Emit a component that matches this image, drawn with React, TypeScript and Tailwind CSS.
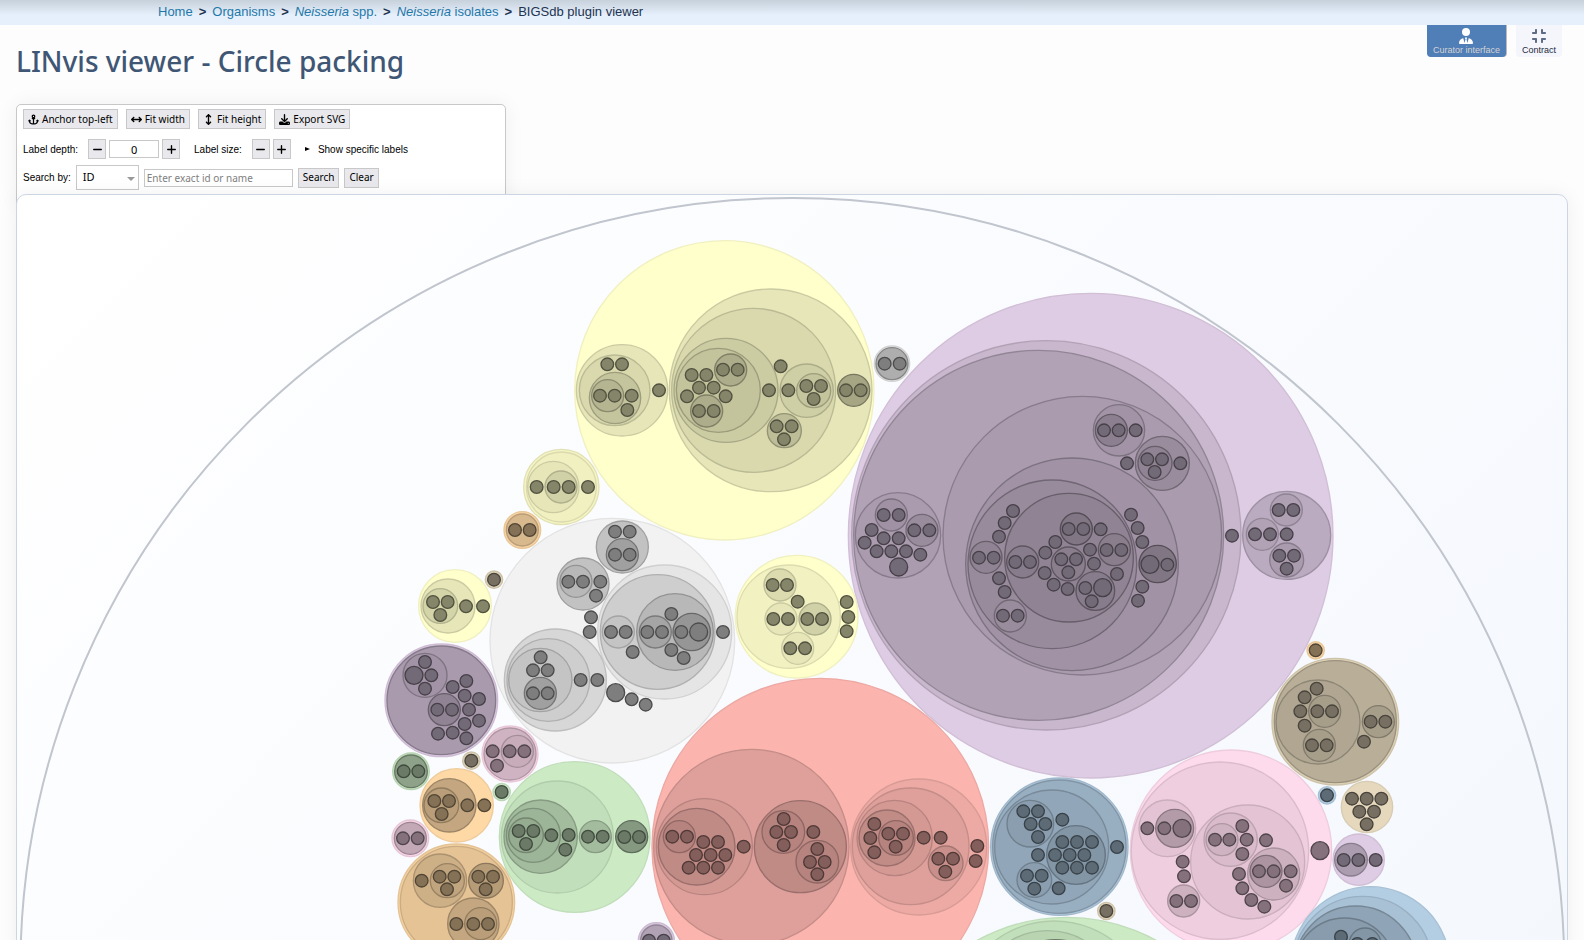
import { useState } from 'react'
import { FaAnchor, FaArrowsLeftRight, FaArrowsUpDown, FaCompress, FaDownload, FaMinus, FaPlus, FaUserTie } from 'react-icons/fa6'

// [cx, cy, radius, shade] where shade 1 is the plain cluster colour
type Ring = [number, number, number, number]
type Point = [number, number]

interface Cluster {
  color: string
  x: number
  y: number
  rings: Ring[]
  leaves: Point[]
  large?: Point[]
}

const YELLOW = '#ffffcc'
const PURPLE = '#decbe4'
const ORANGE = '#fed9a6'
const BROWN = '#e5d8bd'
const GREY = '#f2f2f2'
const PINK = '#fddaec'
const GREEN = '#ccebc5'
const RED = '#fbb4ae'
const BLUE = '#b3cde3'

const LEAF_SHADE = 0.52
const LEAF_RADIUS = 19
const LARGE_RADIUS = 27

const clusters: Cluster[] = [
  {
    color: YELLOW, x: 1680, y: 690,
    rings: [
      [493, 479, 449, 1], [186, 479, 137, 0.9], [164, 479, 106, 0.85], [165, 502, 77, 0.77], [143, 495, 48, 0.71],
      [632, 479, 304, 0.9], [581, 479, 246, 0.85], [498, 479, 156, 0.8], [475, 479, 126, 0.765],
      [512, 418, 48, 0.68], [440, 541, 48, 0.68], [740, 480, 80, 0.81], [761, 480, 51, 0.77],
      [673, 600, 51, 0.74], [881, 479, 48, 0.65],
    ],
    leaves: [
      [142, 401], [186, 401], [120, 495], [164, 495], [215, 495], [202, 538], [297, 479], [395, 433], [439, 433],
      [489, 417], [533, 417], [417, 471], [461, 471], [381, 497], [497, 497], [417, 541], [461, 541], [662, 407],
      [627, 479], [685, 479], [739, 466], [783, 466], [761, 505], [650, 587], [695, 587], [672, 626], [858, 479],
      [902, 479],
    ],
  },
  {
    color: GREY, x: 2520, y: 840,
    rings: [[156, 249, 53, 0.95], [156, 249, 48, 0.72]],
    leaves: [[134, 249], [179, 249]],
  },
  {
    color: PURPLE, x: 2520, y: 1320,
    rings: [
      [752, 285, 727, 1], [619, 284, 584, 0.9], [596, 284, 555, 0.8], [727, 285, 418, 0.765], [696, 371, 319, 0.725],
      [637, 371, 253, 0.685], [687, 351, 193, 0.65], [174, 284, 128, 0.765], [154, 223, 48, 0.72],
      [246, 269, 48, 0.69], [438, 350, 48, 0.65], [511, 526, 48, 0.69], [548, 364, 48, 0.61], [685, 370, 51, 0.62],
      [709, 265, 48, 0.58], [823, 327, 48, 0.62], [766, 451, 58, 0.61], [953, 370, 56, 0.58],
    ],
    leaves: [
      [131, 223], [176, 223], [95, 268], [74, 306], [131, 293], [176, 293], [223, 269], [268, 269], [110, 332],
      [154, 332], [198, 332], [241, 342], [519, 211], [494, 247], [477, 288], [417, 351], [461, 351], [477, 413],
      [494, 454], [489, 525], [533, 525], [526, 364], [570, 364], [646, 304], [616, 336], [664, 356], [708, 356],
      [685, 395], [614, 397], [641, 432], [683, 445], [686, 265], [730, 265], [782, 266], [750, 327], [762, 369],
      [800, 328], [844, 328], [736, 442], [755, 482], [831, 400], [873, 222], [893, 262], [907, 304], [982, 372],
      [907, 438], [894, 480],
    ],
    large: [[176, 379], [788, 441], [930, 371]],
  },
  {
    color: PURPLE, x: 3180, y: 1140,
    rings: [
      [177, 149, 77, 0.73], [154, 149, 48, 0.63], [307, 248, 81, 0.69], [285, 248, 51, 0.65], [680, 464, 132, 0.84],
      [607, 461, 48, 0.8], [679, 388, 48, 0.79], [680, 538, 51, 0.765],
    ],
    leaves: [
      [132, 149], [176, 149], [227, 149], [201, 248], [262, 236], [306, 236], [284, 274], [361, 248], [516, 465],
      [656, 388], [700, 388], [585, 461], [630, 461], [680, 461], [658, 525], [702, 525], [680, 564],
    ],
  },
  {
    color: YELLOW, x: 1140, y: 1320,
    rings: [[544, 139, 113, 0.96], [544, 139, 105, 0.94], [520, 139, 77, 0.9], [543, 139, 48, 0.82]],
    leaves: [[470, 139], [521, 139], [566, 139], [624, 139]],
  },
  {
    color: ORANGE, x: 1140, y: 1320,
    rings: [[427, 268, 55, 0.98], [427, 268, 48, 0.85]],
    leaves: [[405, 268], [449, 268]],
  },
  { color: BROWN, x: 1140, y: 1320, rings: [[342, 417, 26, 0.97]], leaves: [[342, 417]] },
  {
    color: YELLOW, x: 1140, y: 1320,
    rings: [[225, 496, 109, 1], [204, 496, 81, 0.9], [181, 496, 52, 0.83]],
    leaves: [[159, 484], [203, 484], [181, 523], [258, 497], [309, 497]],
  },
  {
    color: GREY, x: 1140, y: 1320,
    rings: [
      [697, 600, 367, 1], [854, 574, 201, 0.945], [833, 574, 172, 0.85], [885, 574, 115, 0.76], [826, 574, 48, 0.68],
      [935, 574, 56, 0.62], [715, 574, 48, 0.81], [727, 319, 78, 0.8], [727, 342, 48, 0.66], [609, 430, 78, 0.8],
      [588, 422, 48, 0.76], [526, 718, 153, 0.89], [505, 718, 124, 0.85], [481, 718, 95, 0.81], [481, 758, 48, 0.66],
    ],
    leaves: [
      [705, 273], [749, 273], [705, 342], [749, 342], [565, 423], [609, 423], [661, 423], [648, 465], [633, 530],
      [629, 574], [693, 574], [737, 574], [758, 634], [802, 574], [846, 574], [904, 574], [874, 520], [874, 628],
      [911, 652], [1029, 574], [482, 650], [459, 689], [503, 689], [459, 758], [503, 758], [602, 718], [652, 718],
      [755, 776], [797, 792],
    ],
    large: [[956, 574], [707, 756]],
  },
  {
    color: PURPLE, x: 1140, y: 1320,
    rings: [[184, 779, 169, 0.99], [184, 779, 163, 0.76], [135, 704, 66, 0.73], [193, 807, 48, 0.65]],
    leaves: [
      [135, 664], [154, 704], [135, 744], [172, 807], [216, 807], [218, 739], [259, 721], [254, 765], [297, 775],
      [267, 807], [297, 840], [254, 850], [218, 876], [174, 879], [259, 893],
    ],
    large: [[102, 704]],
  },
  {
    color: PINK, x: 1140, y: 1890,
    rings: [[390, 370, 84, 0.98], [390, 370, 78, 0.82], [412, 362, 48, 0.79]],
    leaves: [[338, 362], [389, 362], [433, 362], [351, 405]],
  },
  { color: BROWN, x: 1140, y: 1890, rings: [[274, 390, 26, 0.97]], leaves: [[274, 390]] },
  {
    color: GREEN, x: 1140, y: 1890,
    rings: [[93, 422, 55, 0.97], [93, 422, 49, 0.69]],
    leaves: [[71, 422], [115, 422]],
  },
  { color: GREEN, x: 1140, y: 1890, rings: [[365, 484, 26, 0.98]], leaves: [[365, 484]] },
  {
    color: ORANGE, x: 1140, y: 1890,
    rings: [[230, 524, 110, 1], [208, 524, 80, 0.77], [184, 524, 52, 0.73]],
    leaves: [[163, 511], [207, 511], [185, 550], [262, 524], [313, 524]],
  },
  {
    color: PINK, x: 1140, y: 1890,
    rings: [[91, 623, 55, 0.98], [91, 623, 48, 0.77]],
    leaves: [[69, 623], [113, 623]],
  },
  {
    color: ORANGE, x: 1140, y: 1890,
    rings: [
      [229, 815, 175, 0.97], [229, 815, 168, 0.9], [180, 750, 80, 0.81], [202, 750, 51, 0.76], [318, 750, 52, 0.72],
      [280, 879, 77, 0.77], [302, 879, 48, 0.73],
    ],
    leaves: [
      [125, 750], [179, 738], [223, 738], [201, 776], [295, 738], [339, 738], [317, 776], [229, 880], [280, 880],
      [324, 880],
    ],
  },
  {
    color: GREEN, x: 1140, y: 1890,
    rings: [
      [584, 619, 226, 1], [532, 619, 168, 0.95], [482, 618, 110, 0.8], [460, 614, 81, 0.765], [438, 614, 52, 0.73],
      [646, 618, 48, 0.8], [755, 618, 48, 0.65],
    ],
    leaves: [
      [416, 601], [460, 601], [438, 640], [514, 614], [566, 613], [556, 657], [624, 618], [668, 618], [733, 619],
      [777, 619],
    ],
  },
  {
    color: PURPLE, x: 1140, y: 1890,
    rings: [[829, 930, 54, 0.98], [829, 930, 47, 0.8]],
    leaves: [[807, 930], [851, 930]],
  },
  {
    color: YELLOW, x: 1920, y: 1620,
    rings: [
      [470, 228, 184, 1], [446, 228, 155, 0.945], [420, 133, 48, 0.86], [423, 235, 48, 0.9], [525, 235, 48, 0.82],
      [473, 323, 48, 0.9],
    ],
    leaves: [
      [398, 133], [441, 133], [473, 183], [400, 235], [444, 235], [502, 235], [546, 235], [620, 184], [625, 229],
      [620, 272], [451, 323], [495, 323],
    ],
  },
  {
    color: RED, x: 1920, y: 1620,
    rings: [
      [541, 918, 505, 1], [334, 919, 293, 0.89], [193, 918, 144, 0.85], [170, 918, 115, 0.765], [118, 888, 48, 0.73],
      [481, 918, 138, 0.765], [430, 874, 64, 0.73], [532, 963, 64, 0.73], [836, 919, 204, 0.945],
      [812, 917, 175, 0.89], [764, 892, 113, 0.85], [741, 892, 84, 0.77], [768, 892, 52, 0.73], [917, 968, 52, 0.8],
    ],
    leaves: [
      [97, 888], [141, 888], [190, 904], [234, 904], [168, 943], [212, 943], [256, 943], [146, 981], [190, 981],
      [234, 981], [311, 918], [431, 835], [409, 874], [453, 874], [431, 913], [520, 874], [532, 925], [510, 964],
      [554, 964], [532, 1001], [703, 850], [691, 892], [703, 935], [745, 879], [789, 879], [767, 918], [851, 891],
      [902, 891], [895, 954], [939, 954], [916, 993], [1012, 916], [1007, 961],
    ],
  },
  {
    color: BLUE, x: 2940, y: 2220,
    rings: [
      [238, 318, 206, 0.97], [238, 318, 200, 0.85], [215, 319, 171, 0.81], [151, 249, 70, 0.77], [288, 343, 88, 0.73],
      [163, 418, 52, 0.77],
    ],
    leaves: [
      [130, 212], [174, 212], [152, 250], [196, 250], [174, 289], [247, 237], [174, 343], [247, 304], [291, 304],
      [336, 304], [225, 343], [269, 343], [313, 343], [247, 381], [291, 381], [336, 381], [141, 405], [185, 405],
      [163, 444], [236, 443], [411, 319],
    ],
  },
  { color: BROWN, x: 2940, y: 2220, rings: [[379, 511, 26, 0.97]], leaves: [[379, 511]] },
  {
    color: PINK, x: 2940, y: 2220,
    rings: [
      [753, 330, 302, 1], [720, 330, 266, 0.945], [562, 263, 85, 0.9], [584, 263, 57, 0.71], [803, 364, 171, 0.9],
      [752, 297, 80, 0.86], [726, 297, 48, 0.82], [881, 400, 78, 0.81], [858, 392, 48, 0.68], [611, 481, 48, 0.81],
    ],
    leaves: [
      [502, 263], [553, 263], [608, 363], [612, 407], [589, 481], [633, 481], [705, 297], [748, 297], [800, 297],
      [787, 256], [787, 340], [858, 299], [777, 400], [787, 443], [814, 478], [853, 498], [837, 392], [881, 392],
      [932, 392], [918, 435],
    ],
    large: [[606, 263], [1020, 330]],
  },
  { color: BLUE, x: 2940, y: 2220, rings: [[1041, 164, 26, 0.99]], leaves: [[1041, 164]] },
  {
    color: GREEN, x: 2940, y: 2220,
    rings: [[260, 1086, 556, 1], [222, 836, 295, 0.95], [203, 786, 216, 0.9], [227, 767, 170, 0.7]],
    leaves: [],
  },
  { color: ORANGE, x: 3750, y: 1860, rings: [[197, 89, 26, 0.98]], leaves: [[197, 89]] },
  {
    color: BROWN, x: 3750, y: 1860,
    rings: [
      [256, 303, 190, 0.97], [256, 303, 183, 0.81], [204, 304, 126, 0.77], [224, 272, 48, 0.73], [208, 374, 48, 0.73],
      [385, 303, 48, 0.73],
    ],
    leaves: [
      [200, 204], [164, 230], [151, 272], [164, 315], [202, 272], [246, 272], [186, 374], [230, 374], [362, 303],
      [406, 303], [342, 363],
    ],
  },
  {
    color: BROWN, x: 3750, y: 1860,
    rings: [[351, 559, 77, 1]],
    leaves: [[306, 534], [350, 534], [394, 534], [328, 573], [372, 573], [350, 611]],
  },
  {
    color: PURPLE, x: 3750, y: 1860,
    rings: [[326, 717, 77, 1], [303, 717, 49, 0.77]],
    leaves: [[281, 718], [325, 718], [377, 718]],
  },
  {
    color: BLUE, x: 3750, y: 1860,
    rings: [
      [361, 1037, 239, 1], [338, 1036, 209, 0.94], [317, 1040, 184, 0.8], [284, 1043, 151, 0.76],
      [345, 970, 48, 0.73],
    ],
    leaves: [[273, 948], [322, 970], [367, 970]],
  },
]

function shade(hex: string, k: number) {
  const parts = [1, 3, 5].map(i => Math.round(parseInt(hex.slice(i, i + 2), 16) * k))
  return `rgb(${parts.join(' ')})`
}

// deeper levels get a stronger outline
function outline(hex: string, k: number) {
  const depth = 1 - k
  return shade(hex, k * (0.94 - 0.5 * depth - 0.4 * depth * depth))
}

function Disc({ color, cx, cy, r, k }: { color: string; cx: number; cy: number; r: number; k: number }) {
  return <circle cx={cx} cy={cy} r={r} fill={shade(color, k)} stroke={outline(color, k)} strokeWidth={4} />
}

function CirclePacking() {
  return (
    <svg viewBox="51 583 4650 4650" className="block h-auto w-full" role="img" aria-label="Circle packing of LIN codes">
      <circle cx={2377} cy={2908} r={2316} fill="none" stroke="#c0c5ce" strokeWidth={6} />
      {clusters.map((c, i) => (
        <g key={i} transform={`translate(${c.x} ${c.y})`}>
          {c.rings.map(([cx, cy, r, k], j) => <Disc key={j} color={c.color} cx={cx} cy={cy} r={r} k={k} />)}
          {c.leaves.map(([cx, cy], j) => (
            <Disc key={j} color={c.color} cx={cx} cy={cy} r={LEAF_RADIUS} k={LEAF_SHADE} />
          ))}
          {c.large?.map(([cx, cy], j) => (
            <Disc key={j} color={c.color} cx={cx} cy={cy} r={LARGE_RADIUS} k={LEAF_SHADE} />
          ))}
        </g>
      ))}
    </svg>
  )
}

function ToolButton({ icon: Icon, label, onClick }: { icon?: React.ElementType; label: string; onClick?: () => void }) {
  return (
    <button
      type="button"
      onClick={onClick}
      className="flex h-5 items-center gap-[3px] border border-[#c8c8c8] bg-[#e9e9ed] px-1 font-['Noto_Sans'] text-[10px] text-black"
    >
      {Icon && <Icon size={11} />}
      {label}
    </button>
  )
}

function StepButton({ icon: Icon, label, onClick }: { icon: React.ElementType; label: string; onClick?: () => void }) {
  return (
    <button
      type="button"
      aria-label={label}
      onClick={onClick}
      className="flex h-5 w-[18px] items-center justify-center border border-[#c8c8c8] bg-[#e9e9ed] text-black"
    >
      <Icon size={11} />
    </button>
  )
}

function Breadcrumbs() {
  const link = 'text-[#1f78a8] hover:underline'
  return (
    <nav
      aria-label="Breadcrumb"
      className="flex h-[25px] shrink-0 items-center gap-1.5 bg-[#e5f0fc] bg-linear-to-b from-[#c6d1dc] to-[#e5f0fc] to-60% pb-0.5 pl-[158px] text-[13px] leading-5 text-[#1e3350]"
    >
      <a href="#home" className={link}>Home</a>
      <b>&gt;</b>
      <a href="#organisms" className={link}>Organisms</a>
      <b>&gt;</b>
      <a href="#neisseria" className={link}><i>Neisseria</i> spp.</a>
      <b>&gt;</b>
      <a href="#isolates" className={link}><i>Neisseria</i> isolates</a>
      <b>&gt;</b>
      <span>BIGSdb plugin viewer</span>
    </nav>
  )
}

function Toolbar() {
  const [depth, setDepth] = useState('0')
  const step = (n: number) => setDepth(d => String(Math.max(0, Number(d) + n)))

  return (
    <div className="h-[100px] w-[490px] rounded-t-[5px] border border-[#c8c8c8] bg-white px-1.5 pt-1 text-[10px] text-black shadow-[0_0_20px_rgba(0,0,0,0.06)]">
      <div className="flex gap-2">
        <ToolButton icon={FaAnchor} label="Anchor top-left" />
        <ToolButton icon={FaArrowsLeftRight} label="Fit width" />
        <ToolButton icon={FaArrowsUpDown} label="Fit height" />
        <ToolButton icon={FaDownload} label="Export SVG" />
      </div>
      <div className="mt-2.5 flex items-center">
        <label htmlFor="depth" className="mr-2.5">Label depth:</label>
        <StepButton icon={FaMinus} label="Decrease label depth" onClick={() => step(-1)} />
        <input
          id="depth"
          value={depth}
          onChange={e => setDepth(e.target.value)}
          className="mx-[3px] h-[18px] w-[50px] border border-[#c8c8c8] bg-white text-center font-['Noto_Sans'] text-[11px] leading-4"
        />
        <StepButton icon={FaPlus} label="Increase label depth" onClick={() => step(1)} />
        <span className="mr-2.5 ml-3.5">Label size:</span>
        <div className="flex gap-[3px]">
          <StepButton icon={FaMinus} label="Decrease label size" />
          <StepButton icon={FaPlus} label="Increase label size" />
        </div>
        <button type="button" className="ml-3.5 flex items-center gap-2">
          <svg viewBox="0 0 5 4" className="h-1 w-[5px]" aria-hidden="true"><path d="M0 0L5 2L0 4Z" /></svg>
          Show specific labels
        </button>
      </div>
      <div className="mt-1.5 flex items-center">
        <label htmlFor="field" className="mr-[5px]">Search by:</label>
        <div className="relative">
          <select
            id="field"
            className="h-[25px] w-[63px] appearance-none border border-[#c8c8c8] bg-white pl-1.5 font-['Noto_Sans'] text-[11px]"
          >
            <option>ID</option>
            <option>Name</option>
          </select>
          <svg viewBox="0 0 8 4" className="pointer-events-none absolute top-3 right-1 h-1 w-2 fill-[#999]" aria-hidden="true">
            <path d="M0 0H8L4 4Z" />
          </svg>
        </div>
        <input
          aria-label="Search value"
          placeholder="Enter exact id or name"
          className="mr-[5px] ml-[5px] h-[18px] w-[149px] border border-[#c8c8c8] bg-white px-0.5 font-['Noto_Sans'] text-[10px] placeholder:text-[#808080]"
        />
        <div className="flex gap-[5px]">
          <ToolButton label="Search" />
          <ToolButton label="Clear" />
        </div>
      </div>
    </div>
  )
}

export default function App() {
  return (
    <div className="flex h-screen flex-col overflow-hidden bg-[#fdfdfd] font-['Liberation_Sans',sans-serif]">
      <Breadcrumbs />
      <main className="min-h-0 flex-1 px-4">
        <header className="flex h-[79px] items-start justify-between">
          <h1 className="mt-4 font-['Noto_Sans'] text-[28px] leading-10 font-medium text-[#3f5675]">
            LINvis viewer - Circle packing
          </h1>
          <div className="mr-1.5 flex gap-2.5">
            <button type="button" className="flex h-8 flex-col items-center rounded-b bg-[#507eb7] px-1.5 pt-[3px] text-[9px] text-[#d3d3d3] shadow-[1px_0_0_#bbb]">
              <FaUserTie size={16} className="text-white" />
              <span className="leading-3">Curator interface</span>
            </button>
            <button type="button" className="flex h-8 flex-col items-center rounded-b bg-[#f4f6fb] px-1.5 pt-[3px] text-[9px] text-[#1e2a40]">
              <FaCompress size={16} className="text-[#5d6b86]" />
              <span className="leading-3">Contract</span>
            </button>
          </div>
        </header>
        <Toolbar />
        <section className="relative -mt-2.5 overflow-hidden rounded-[10px] border border-[#ccd6e3] bg-linear-to-br from-white via-[#f8fafe] to-[#f0f5fb] shadow-[0_0_20px_rgba(0,0,0,0.06)]">
          <CirclePacking />
        </section>
      </main>
    </div>
  )
}
